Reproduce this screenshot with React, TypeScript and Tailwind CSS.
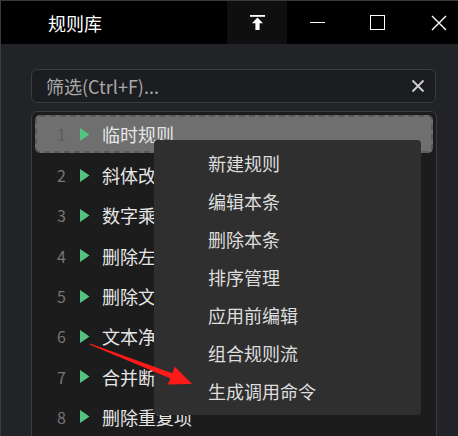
const rules = [
  "临时规则",
  "斜体改正",
  "数字乘法",
  "删除左侧",
  "删除文末",
  "文本净化",
  "合并断行",
  "删除重复项",
];

const menuItems = [
  "新建规则",
  "编辑本条",
  "删除本条",
  "排序管理",
  "应用前编辑",
  "组合规则流",
  "生成调用命令",
];

const font = { fontFamily: '"Noto Sans CJK SC", "Noto Sans", sans-serif' };

function PinIcon() {
  return (
    <svg width="15" height="15" viewBox="0 0 15 15">
      <rect x="0" y="0" width="15" height="1.8" fill="#fff" />
      <path d="M7.5 2.6 L13 8.3 L9.6 8.3 L9.6 15 L5.4 15 L5.4 8.3 L2 8.3 Z" fill="#fff" />
    </svg>
  );
}

export default function App() {
  return (
    <div
      className="relative w-[458px] h-[436px] overflow-hidden border-l border-t border-[#3a3a3a] bg-[#222327]"
      style={font}
    >
      {/* title bar */}
      <div className="flex h-[43px] items-center bg-black">
        <div className="w-[226px] pl-[47px] text-[18px] leading-none text-white">规则库</div>
        <div className="flex h-full w-[60px] items-center justify-center bg-[#0f0f0f]">
          <PinIcon />
        </div>
        <div className="flex h-full w-[60px] items-center justify-center">
          <div className="h-[1.5px] w-[15px] bg-white" />
        </div>
        <div className="flex h-full w-[60px] items-center justify-center">
          <div className="h-[15px] w-[15px] border-[1.5px] border-white" />
        </div>
        <div className="flex h-full flex-1 items-center pl-[24px]">
          <svg width="16" height="16" viewBox="0 0 16 16">
            <path d="M1 1 L15 15 M15 1 L1 15" stroke="#fff" strokeWidth="1.4" />
          </svg>
        </div>
      </div>

      {/* search */}
      <div className="ml-[30px] mt-[25px] flex h-[34px] w-[405px] items-center justify-between rounded-[6px] border border-[#3b3c41] bg-[#1c1d20] pl-[14px] pr-[10px]">
        <span className="text-[18px] leading-none text-[#a8a8a8]">筛选(Ctrl+F)...</span>
        <svg width="14" height="14" viewBox="0 0 14 14">
          <path d="M1.5 1.5 L12.5 12.5 M12.5 1.5 L1.5 12.5" stroke="#d0d0d0" strokeWidth="1.8" />
        </svg>
      </div>

      {/* list */}
      <div className="ml-[30px] mt-[8px] h-[340px] w-[406px] rounded-t-[6px] border border-[#3b3c41] bg-[#1c1c1c] px-[3px] pt-[3px]">
        {rules.map((r, i) => (
          <div
            key={i}
            className={
              i === 0
                ? "flex h-[38px] items-center rounded-[5px] border-2 border-dashed border-[#5a5a5a] bg-[#6f6f6f] mb-[2px]"
                : "flex h-[40.3px] items-center"
            }
          >
            <span
              className={
                "w-[31px] text-right text-[16px] leading-none " +
                (i === 0 ? "text-[#5c5c5c] -ml-[2px]" : "text-[#767676]")
              }
            >
              {i + 1}
            </span>
            <svg width="10" height="13" viewBox="0 0 10 13" className="ml-[14px]">
              <path d="M0 0 L9.5 6.5 L0 13 Z" fill="#55c27f" />
            </svg>
            <span className="ml-[12px] text-[18px] leading-none text-[#e6e6e6]">{r}</span>
          </div>
        ))}
      </div>

      {/* context menu */}
      <div className="absolute left-[153px] top-[139px] w-[267px] rounded-[4px] bg-[#2f2f2f] pt-[4px] pb-[5px]">
        {menuItems.map((m) => (
          <div key={m} className="flex h-[38px] items-center pl-[54px] text-[18px] leading-none text-[#dedede]">
            {m}
          </div>
        ))}
      </div>

      {/* red arrow annotation */}
      <svg className="absolute left-0 top-0" width="458" height="436" viewBox="-1 -1 458 436">
        <polygon
          points="88,341.5 170.4,371.2 172.8,364.8 190,382 165.6,382.6 168.6,376.6 88,342.8"
          fill="#ff1a1a"
        />
      </svg>
    </div>
  );
}
